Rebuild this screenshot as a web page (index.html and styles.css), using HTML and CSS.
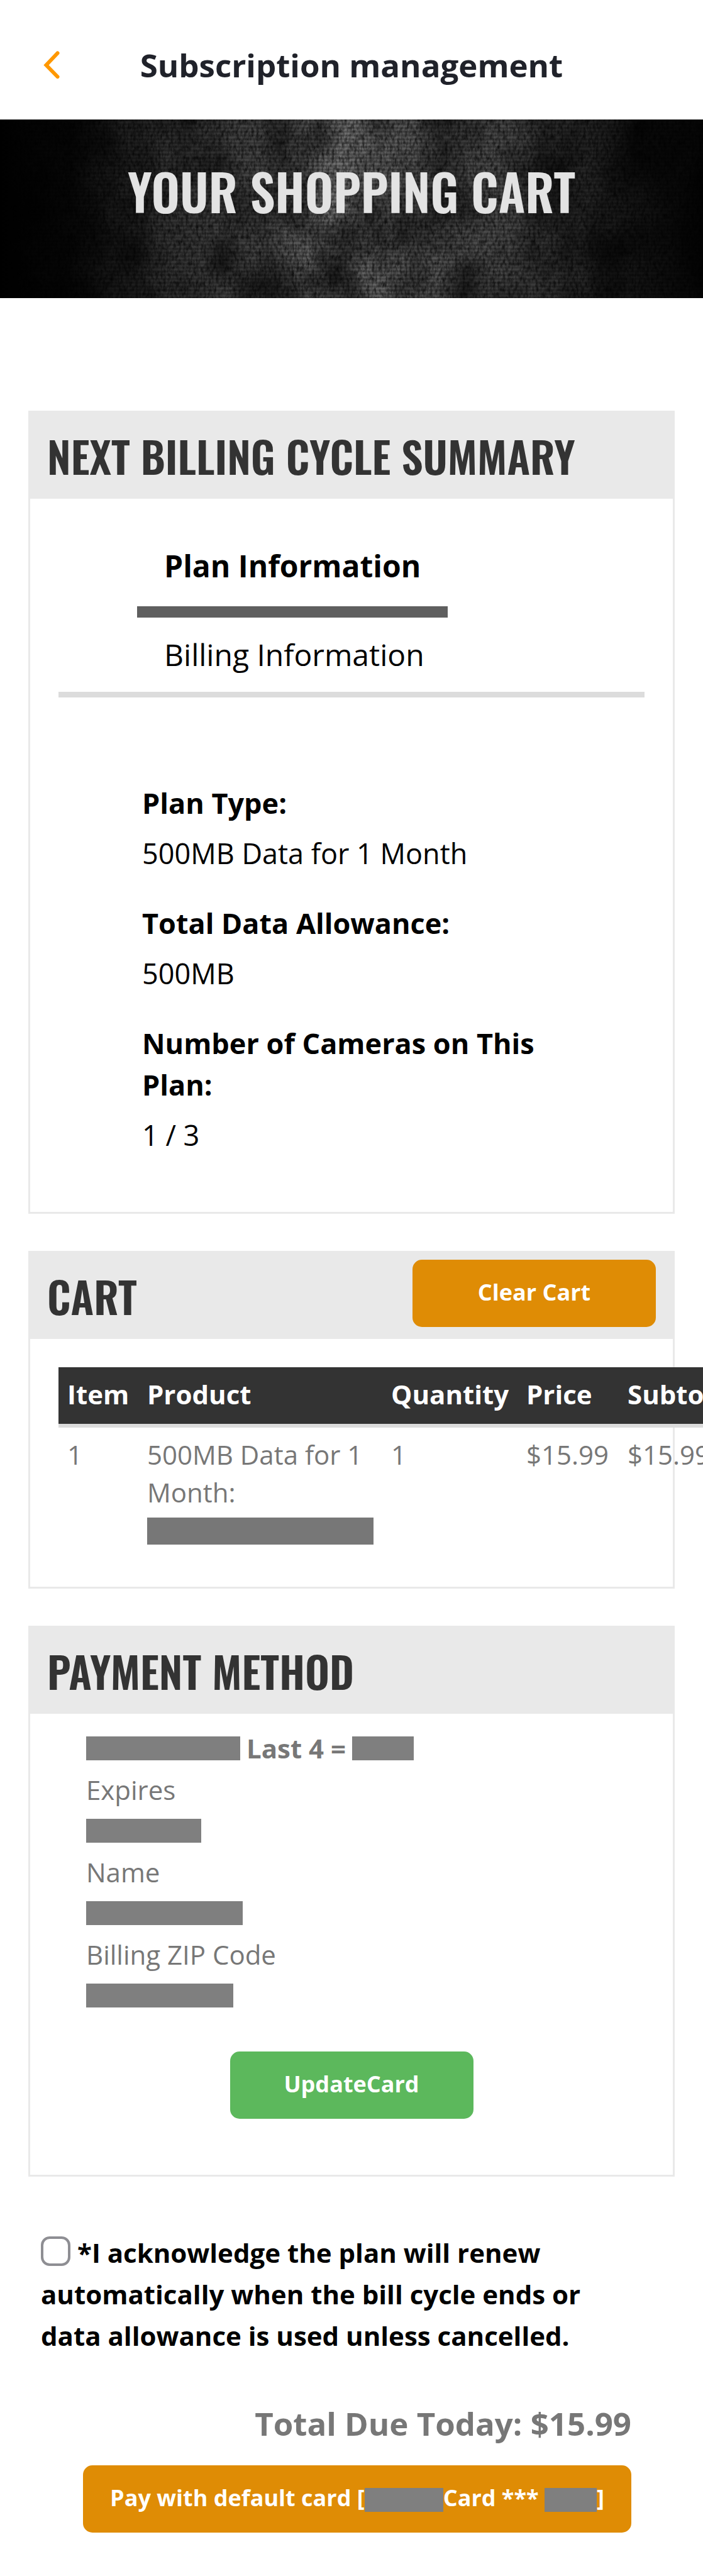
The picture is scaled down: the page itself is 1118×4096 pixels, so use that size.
FILE: index.html
```
<!DOCTYPE html>
<html lang="en">
<head>
<meta charset="utf-8">
<title>Subscription management</title>
<link rel="stylesheet" href="styles.css">
</head>
<body>
<header class="top">
    <a href="#" class="back" aria-label="Back">
        <svg width="26" height="44" viewBox="0 0 26 44"><path d="M22.500 3.500L4.500 22.500L22.500 41" fill="none" stroke="#ff9800" stroke-width="6" stroke-linecap="round" stroke-linejoin="miter"/></svg>
    </a>
    <h1>Subscription management</h1>
</header>

<div class="hero">
    <svg class="grain" width="100%" height="100%">
        <filter id="scratch" x="0" y="0" width="100%" height="100%">
            <feTurbulence type="fractalNoise" baseFrequency="0.25 0.12" numOctaves="3" seed="4"/>
            <feColorMatrix type="matrix" values="0 0 0 0 0  0 0 0 0 0  0 0 0 0 0  1.400 0 0 0 -0.5"/>
        </filter>
        <filter id="cloud" x="0" y="0" width="100%" height="100%">
            <feTurbulence type="fractalNoise" baseFrequency="0.012 0.009" numOctaves="4" seed="9"/>
            <feColorMatrix type="matrix" values="0 0 0 0 0  0 0 0 0 0  0 0 0 0 0  1.500 0 0 0 -0.55"/>
        </filter>
        <rect width="100%" height="100%" filter="url(#cloud)"/>
        <rect width="100%" height="100%" filter="url(#scratch)"/>
    </svg>
    <h2>YOUR SHOPPING CART</h2>
</div>

<main>
    <section class="panel">
        <div class="panel_head"><h3>NEXT BILLING CYCLE SUMMARY</h3></div>
        <div class="summary">
            <ul class="tabs">
                <li><a href="#" class="active">Plan Information</a></li>
                <li><a href="#">Billing Information</a></li>
            </ul>
            <dl class="plan">
                <dt>Plan Type:</dt>
                <dd>500MB Data for 1 Month</dd>
                <dt>Total Data Allowance:</dt>
                <dd>500MB</dd>
                <dt>Number of Cameras on This Plan:</dt>
                <dd>1 / 3</dd>
            </dl>
        </div>
    </section>

    <section class="panel">
        <div class="panel_head">
            <h3>CART</h3>
            <button type="button" class="btn">Clear Cart</button>
        </div>
        <div class="cart">
            <table>
                <colgroup><col class="c_item"><col class="c_product"><col class="c_qty"><col class="c_price"><col class="c_sub"></colgroup>
                <thead>
                    <tr><th>Item</th><th>Product</th><th>Quantity</th><th>Price</th><th>Subtotal</th></tr>
                </thead>
                <tbody>
                    <tr>
                        <td>1</td>
                        <td>500MB Data for 1 Month:<span class="mask m_product"></span></td>
                        <td>1</td>
                        <td>$15.99</td>
                        <td>$15.99</td>
                    </tr>
                </tbody>
            </table>
        </div>
    </section>

    <section class="panel">
        <div class="panel_head"><h3>PAYMENT METHOD</h3></div>
        <div class="payment">
            <p class="card_no"><span class="mask m_brand"></span><strong>Last 4 =</strong><span class="mask m_last"></span></p>
            <dl>
                <dt>Expires</dt>
                <dd><span class="mask m_exp"></span></dd>
                <dt>Name</dt>
                <dd><span class="mask m_name"></span></dd>
                <dt>Billing ZIP Code</dt>
                <dd><span class="mask m_zip"></span></dd>
            </dl>
            <button type="button" class="btn green">UpdateCard</button>
        </div>
    </section>

    <form class="checkout">
        <p class="ack"><input type="checkbox" id="ack"><label for="ack">*I acknowledge the plan will renew automatically when the bill cycle ends or data allowance is used unless cancelled.</label></p>
        <p class="total">Total Due Today: $15.99</p>
        <button type="button" class="btn pay">Pay with default card [<span class="mask m_pay1"></span>Card *** <span class="mask m_pay2"></span>]</button>
    </form>
</main>
</body>
</html>
```

FILE: styles.css
```
*{margin:0;padding:0;box-sizing:border-box;}
body{font-family:"Open Sans",sans-serif;font-size:42px;line-height:66px;color:#777;background:#fff;overflow-x:hidden;}
ul{list-style:none;}
a{text-decoration:none;color:#000;}
h2,h3{font-family:Oswald,"Open Sans Condensed","Roboto Condensed",sans-serif;font-weight:600;}

.top{height:190px;padding:16px 69px 0;display:grid;grid-template-columns:60px 1fr 60px;align-items:center;}
.top .back{display:flex;}
.top h1{font-size:51px;font-weight:bold;color:#20222a;text-align:center;}

.hero{position:relative;height:284px;padding-top:54px;text-align:center;
background:repeating-linear-gradient(rgba(0,0,0,.2) 0,rgba(0,0,0,.2) 3px,transparent 3px,transparent 6px),linear-gradient(90deg,#000 0,#080808 10%,#303030 22%,#484848 38%,#707070 48%,#585858 58%,#484848 72%,#181818 88%,#050505 100%);}
.hero .grain{position:absolute;left:0;top:0;}
.hero h2{position:relative;font-size:79px;line-height:120px;color:#e3e3e3;}

main{padding:179px 45px 68px;}
.panel{border:3px solid #e9e9e9;margin-bottom:59px;}
.panel_head{height:137px;padding:0 27px;background:#e9e9e9;display:flex;justify-content:space-between;}
.panel_head h3{font-size:68px;line-height:137px;color:#333;}
.panel_head .btn{margin-top:11px;}

.btn{min-width:387px;height:107px;padding:0 43px 4px;border:0;border-radius:15px;background:#df8c05;color:#fff;font:bold 36px/66px "Open Sans",sans-serif;}
.btn.green{background:#5cb85c;}
.mask{display:inline-block;height:38px;background:#7f7f7f;}

.summary{padding:48px 45px 89px;}
.tabs{padding-left:125px;border-bottom:9px solid #dcdcdc;display:flex;flex-direction:column;align-items:flex-start;}
.tabs a{display:block;padding:25px 43px;font-size:48px;line-height:68px;}
.tabs .active{font-weight:bold;padding-bottom:30px;border-bottom:18px solid #5f5f5f;}
.plan{padding:135px 133px 0;color:#000;font-size:45px;}
.plan dt{font-weight:bold;}
.plan dd{margin:14px 0 45px;}
.plan dd:last-child{margin-bottom:0;}

.cart{padding:45px 0 50px 45px;}
.cart table{width:1109px;table-layout:fixed;border-collapse:collapse;line-height:60px;text-align:left;}
.cart th,.cart td{padding:13px 14px 17px;vertical-align:top;}
.cart th{background:#333;color:#fff;}
.cart thead{border-bottom:6px solid #dcdcdc;}
.c_item{width:127px;}
.c_product{width:388px;}
.c_qty{width:215px;}
.c_price{width:161px;}
.m_product{display:block;width:360px;height:43px;margin-top:10px;background:#777;}

.payment{padding:22px 89px 89px;}
.card_no{display:flex;align-items:center;gap:10px;}
.payment dt{line-height:65px;}
.payment dd{display:flex;align-items:center;height:66px;}
.payment .btn{display:block;margin:56px auto 0;}
.m_brand{width:245px;}
.m_last{width:98px;}
.m_exp{width:183px;}
.m_name{width:249px;}
.m_zip{width:234px;}

.checkout{padding:29px 20px 0;display:flex;flex-direction:column;}
.ack{padding-right:65px;color:#000;font-weight:bold;}
.ack input{appearance:none;width:47px;height:47px;margin-right:11px;border:4px solid #8e8e93;border-radius:14px;vertical-align:-5px;}
.total{margin:73px 49px 34px;text-align:right;font-size:51px;font-weight:bold;}
.pay{align-self:flex-end;margin-right:49px;white-space:nowrap;}
.pay .mask{vertical-align:middle;}
.m_pay1{width:125px;}
.m_pay2{width:83px;}
```
